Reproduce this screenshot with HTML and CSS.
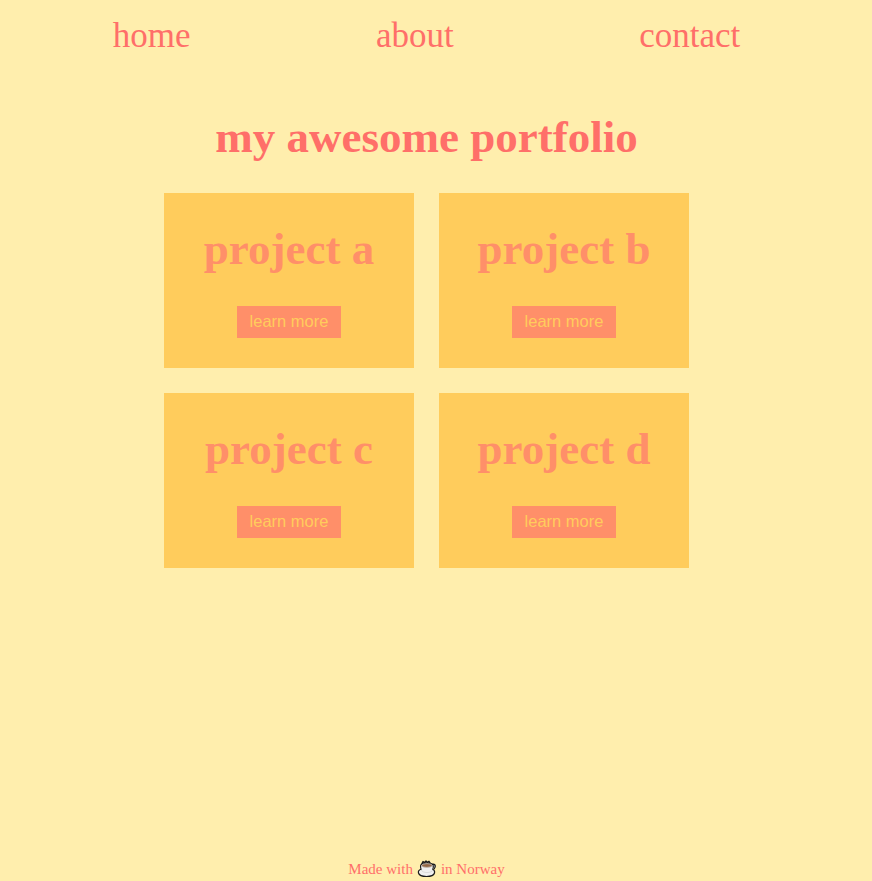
FILE: index.html
```html
<!DOCTYPE html>
<html lang="en">
<head>
<meta charset="utf-8">
<title>my awesome portfolio</title>
<link rel="stylesheet" href="styles.css">
</head>
<body>
<nav class="nav">
  <a href="#">home</a>
  <a href="#">about</a>
  <a href="#">contact</a>
</nav>
<main class="main">
  <h1 class="title">my awesome portfolio</h1>
  <section class="projects">
    <article class="card"><h2>project a</h2><button>learn more</button></article>
    <article class="card"><h2>project b</h2><button>learn more</button></article>
    <article class="card"><h2>project c</h2><button>learn more</button></article>
    <article class="card"><h2>project d</h2><button>learn more</button></article>
  </section>
</main>
<footer class="footer">
  <span>Made with</span>
  <svg class="cup" viewBox="0 0 20 18" width="20" height="18" aria-hidden="true">
    <path d="M5 3.500 6 1.500 7.500 2.500 9 1 10.500 2.300 12 1.300 13.500 3.500z" fill="#b5ad98" stroke="#1c1c1c" stroke-width="1.300" stroke-linejoin="round"/>
    <path d="M15 4.500c3.500-1.200 4.200 2.500 2 4.500" fill="#e8e8e8" stroke="#1c1c1c" stroke-width="1.400"/>
    <path d="M3.700 5.300c-.4 1.700-.1 3 .3 4C1.800 10 1.100 11.500 1.500 13 2.200 15.500 5.700 16.500 9.500 16.500s7.300-1 8-3.500c.4-1.500-.3-2.900-1.700-3.700.7-1.400.7-2.700.3-4C14.500 2.500 5.300 2.500 3.700 5.300z" fill="#f0f0f0" stroke="#1c1c1c" stroke-width="1.200"/>
    <ellipse cx="9.900" cy="5.500" rx="5.200" ry="1.900" fill="#936746" stroke="#c7c1bc" stroke-width=".8"/>
    <path d="M4.200 10c1.500 3.300 9.900 3.500 11.800 0" fill="none" stroke="#d4d4d4" stroke-width=".8"/>
  </svg>
  <span>in Norway</span>
</footer>
</body>
</html>
```
FILE: styles.css
```css
* { box-sizing: border-box; }
body {
  margin: 0;
  width: 853px;
  height: 881px;
  display: flex;
  flex-direction: column;
  background: #ffeead;
  color: #ff6f69;
  font-family: "Liberation Serif", "Times New Roman", serif;
}
.nav {
  display: flex;
  justify-content: space-around;
  padding: 15px 20px 0;
  font-size: 35px;
  line-height: 41px;
}
.nav a { color: inherit; text-decoration: none; }
.main { flex: 1; }
.title {
  margin: 55px 0 30px;
  font-size: 45px;
  line-height: 52px;
  text-align: center;
}
.projects {
  display: grid;
  grid-template-columns: 250px 250px;
  grid-auto-rows: 175px;
  gap: 25px;
  justify-content: center;
}
.card {
  display: flex;
  flex-direction: column;
  align-items: center;
  background: #ffcc5c;
  color: #ff8f69;
}
.card h2 {
  margin: 30px 0 31px;
  font-size: 45px;
  line-height: 52px;
}
.card button {
  width: 104px;
  height: 32px;
  padding: 0 0 2px;
  border: 0;
  background: #ff8f69;
  color: #ffcc5c;
  font: 16.5px/30px "Liberation Sans", Arial, sans-serif;
}
.footer {
  display: flex;
  justify-content: center;
  align-items: center;
  gap: 4px;
  height: 23px;
  font-size: 15px;
}
.cup { margin-top: -2px; }
```
